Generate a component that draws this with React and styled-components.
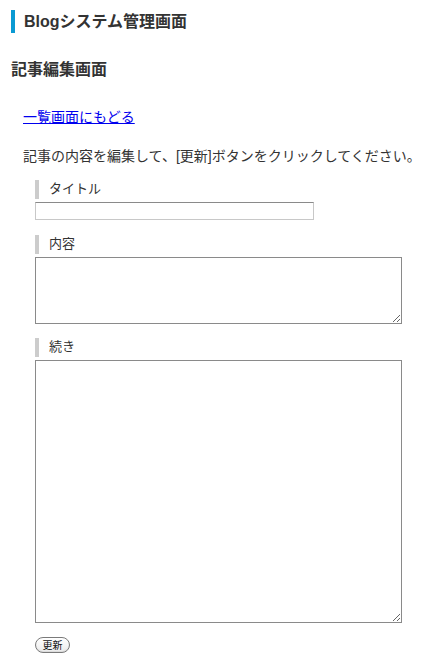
import React from "react";
import styled, { createGlobalStyle } from "styled-components";

const Global = createGlobalStyle`
  html, body { margin: 0; padding: 0; background: #fff; }
  body {
    font-family: "Liberation Sans", "Noto Sans CJK JP", sans-serif;
    color: #333;
    font-size: 14px;
  }
`;

const Page = styled.div`
  padding: 10px 0 10px 11px;
  display: flex;
  flex-direction: column;
`;

const SiteTitle = styled.h1`
  margin: 0;
  border-left: 4px solid #0a9ad3;
  padding-left: 9px;
  height: 23px;
  line-height: 23px;
  font-size: 16px;
  font-weight: bold;
  color: #333;
`;

const PageTitle = styled.h2`
  margin: 27px 0 0;
  font-size: 16px;
  line-height: 20px;
  font-weight: bold;
  color: #333;
`;

const Body = styled.div`
  padding-left: 12px;
  display: flex;
  flex-direction: column;
`;

const BackLink = styled.a`
  margin-top: 27px;
  line-height: 20px;
  font-size: 14px;
  color: #0000ee;
  text-decoration: underline;
  align-self: flex-start;
`;

const Lead = styled.p`
  margin: 19px 0 0;
  line-height: 20px;
  font-size: 14px;
  white-space: nowrap;
`;

const Form = styled.form`
  padding-left: 12px;
  display: flex;
  flex-direction: column;
  align-items: flex-start;
`;

const Label = styled.label`
  display: block;
  margin-top: ${(p) => p.$gap}px;
  border-left: 4px solid #ccc;
  padding-left: 10px;
  height: 19px;
  line-height: 18px;
  font-size: 13px;
  color: #333;
`;

const TextInput = styled.input`
  margin-top: 3px;
  box-sizing: border-box;
  width: 279px;
  height: 18px;
  padding: 0 2px;
  border: 1px solid #c8c8c8;
  border-top-color: #8a8a8a;
  background: #fff;
  outline: none;
`;

const TextArea = styled.textarea`
  margin-top: 3px;
  box-sizing: border-box;
  width: 367px;
  height: ${(p) => p.$h}px;
  border: 1px solid #8a8a8a;
  padding: 2px;
  resize: both;
  background: #fff;
  outline: none;
  font-family: inherit;
`;

const Submit = styled.button`
  margin-top: 14px;
  box-sizing: border-box;
  width: 35px;
  height: 16px;
  padding: 0;
  border: 1px solid #7a7a7a;
  border-radius: 8px;
  background: linear-gradient(#ffffff, #ececec);
  box-shadow: inset 0 -1px 1px rgba(0,0,0,0.08);
  font-family: "Noto Sans CJK JP", sans-serif;
  font-size: 10px;
  line-height: 14px;
  color: #111;
`;

export default function App() {
  return (
    <>
      <Global />
      <Page>
        <SiteTitle>Blogシステム管理画面</SiteTitle>
        <PageTitle>記事編集画面</PageTitle>
        <Body>
          <BackLink href="#">一覧画面にもどる</BackLink>
          <Lead>記事の内容を編集して、[更新]ボタンをクリックしてください。</Lead>
          <Form onSubmit={(e) => e.preventDefault()}>
            <Label $gap={14}>タイトル</Label>
            <TextInput type="text" />
            <Label $gap={15}>内容</Label>
            <TextArea $h={67} />
            <Label $gap={14}>続き</Label>
            <TextArea $h={263} />
            <Submit type="submit">更新</Submit>
          </Form>
        </Body>
      </Page>
    </>
  );
}
